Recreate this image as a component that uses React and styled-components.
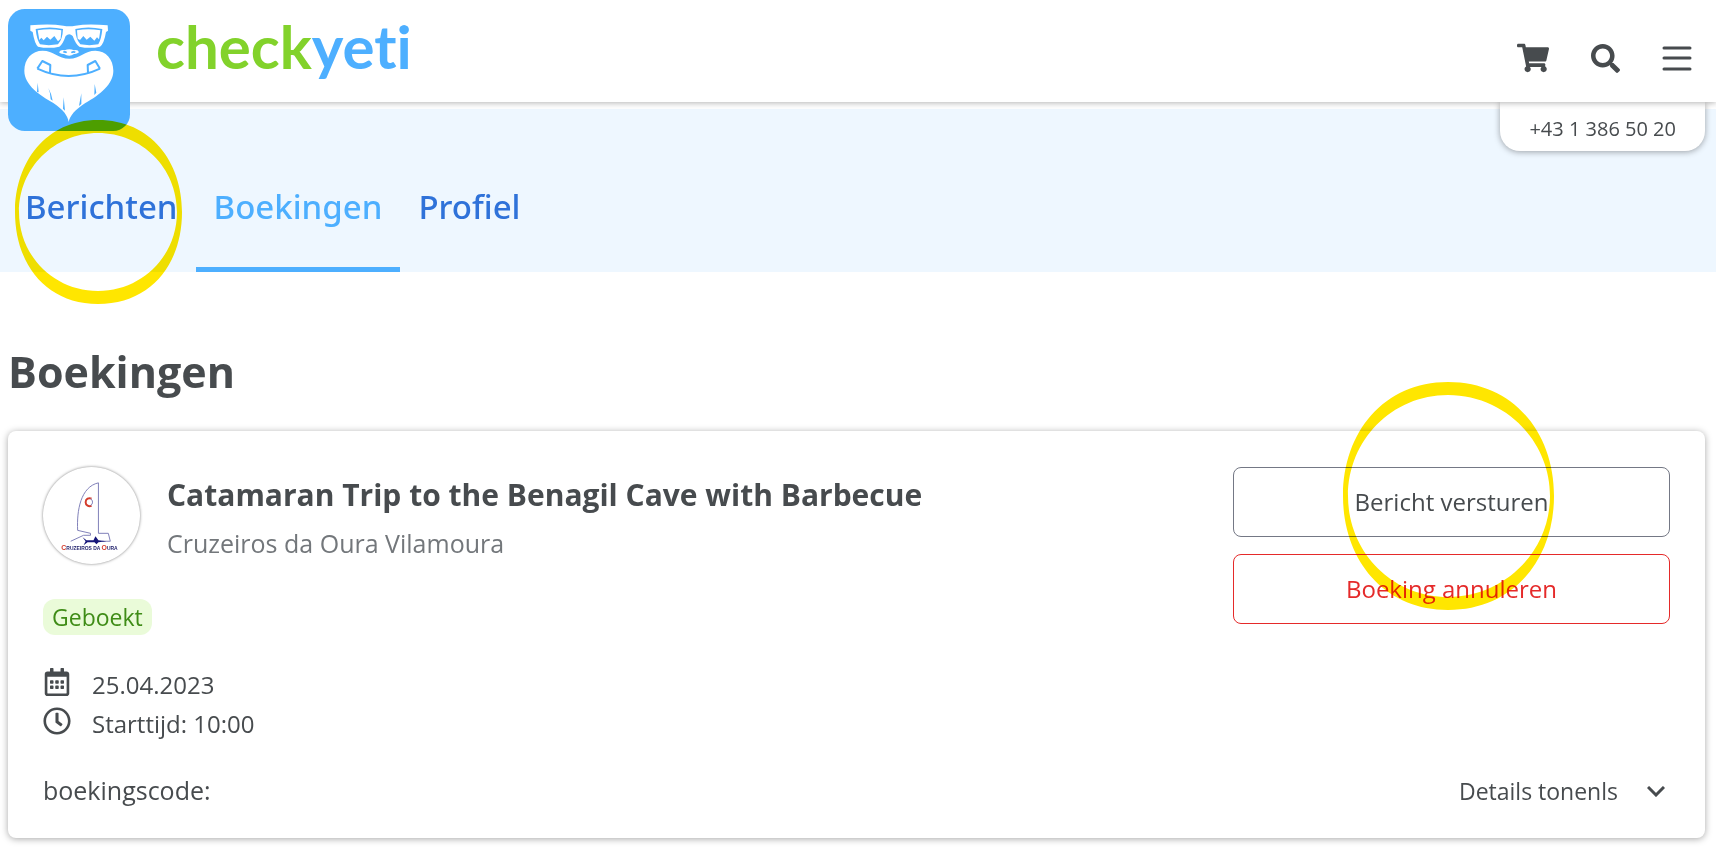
import styled, { createGlobalStyle } from "styled-components";
import { FaShoppingCart, FaSearch, FaRegCalendarAlt, FaRegClock } from "react-icons/fa";

const GlobalStyle = createGlobalStyle`
	* {
		box-sizing: border-box;
	}
	body {
		margin: 0;
		background: #fff;
		color: #474b4e;
		font-family: "Segoe UI", "Open Sans", "Noto Sans", sans-serif;
		font-size: 24px;
		line-height: 36px;
	}
	button {
		font: inherit;
		color: inherit;
		background: none;
		border: 0;
		padding: 0;
		cursor: pointer;
	}
	h1, h2, p, ul {
		margin: 0;
		padding: 0;
	}
	svg {
		display: block;
	}
`

const Page = styled.div`
	position: relative;
`

const Header = styled.header`
	position: relative;
	z-index: 2;
	display: flex;
	justify-content: space-between;
	height: 102px;
	padding: 0 24px 0 8px;
	background: #fff;
	box-shadow: 0 1px 6px rgba(0, 0, 0, 0.3);
`

const HomeLink = styled.a`
	display: flex;
	gap: 26px;
	height: 130px;
	padding-top: 9px;
	text-decoration: none;
`

const Wordmark = styled.span`
	font-family: Lato, sans-serif;
	font-size: 60px;
	font-weight: 700;
	font-variant-ligatures: none;
	line-height: 74px;
	color: ${({ $blue }) => ($blue ? "#4dafff" : "#82d22b")};
`

const Tools = styled.div`
	display: flex;
	align-items: center;
	gap: 42px;
	padding-top: 14px;
`

const Phone = styled.a`
	position: absolute;
	z-index: 1;
	top: 102px;
	right: 11px;
	padding: 9px 29px 4px;
	border-radius: 0 0 20px 20px;
	background: #fff;
	box-shadow: 0 1px 6px rgba(0, 0, 0, 0.35);
	font-size: 20px;
	color: inherit;
	text-decoration: none;
`

const Tabs = styled.nav`
	display: flex;
	height: 163px;
	margin-top: 7px;
	padding-left: 7px;
	background: #eef7ff;
`

const Tab = styled.a`
	padding: 80px 18px 0;
	border-bottom: 5px solid ${({ $active }) => ($active ? "#4dafff" : "transparent")};
	font-family: "Noto Sans", sans-serif;
	font-size: 33px;
	font-weight: 500;
	color: ${({ $active }) => ($active ? "#4dafff" : "#2f72d9")};
	text-decoration: none;
`

const Main = styled.main`
	padding: 68px 11px 14px 8px;
`

const PageTitle = styled.h1`
	font-size: 43px;
	line-height: 64px;
	font-weight: 700;
`

const Card = styled.article`
	margin-top: 27px;
	padding: 36px 35px 30px;
	border-radius: 8px;
	box-shadow: 0 1px 7px rgba(0, 0, 0, 0.35);
`

const CardTop = styled.div`
	display: flex;
	justify-content: space-between;
`

const Trip = styled.div`
	display: flex;
	gap: 27px;
	height: 98px;
`

const Avatar = styled.div`
	width: 97px;
	height: 97px;
	border-radius: 50%;
	overflow: hidden;
	box-shadow: 0 0 3px rgba(0, 0, 0, 0.5);
`

const TripTitle = styled.h2`
	padding-top: 6px;
	font-size: 30px;
	line-height: 44px;
	font-weight: 700;
`

const Provider = styled.p`
	padding-top: 8px;
	font-size: 25px;
	color: #73777b;
`

const Status = styled.span`
	display: inline-block;
	margin-top: 34px;
	padding: 0 9px;
	border-radius: 12px;
	background: #eafbd9;
	font-size: 23px;
	color: #3f8c17;
`

const Facts = styled.ul`
	margin-top: 29px;
	list-style: none;
`

const Fact = styled.li`
	display: flex;
	height: 39px;
	gap: 21px;
	line-height: 42px;
	svg {
		width: 28px;
		height: 28px;
		margin-top: 4px;
	}
`

const Actions = styled.div`
	display: flex;
	flex-direction: column;
	gap: 17px;
	width: 437px;
`

const ActionButton = styled.button`
	height: 70px;
	border: 1px solid ${({ $danger }) => ($danger ? "#e52a2a" : "#747885")};
	border-radius: 8px;
	color: ${({ $danger }) => ($danger ? "#e52a2a" : "inherit")};
`

const CardBottom = styled.div`
	display: flex;
	justify-content: space-between;
	margin-top: 30px;
`

const BookingCode = styled.span`
	font-size: 25px;
`

const DetailsButton = styled.button`
	display: flex;
	align-items: center;
	gap: 29px;
	margin-right: 5px;
	padding-top: 2px;
	font-size: 23px;
	line-height: 34px;
`

const Marker = styled.svg`
	position: absolute;
	z-index: 3;
	mix-blend-mode: multiply;
	pointer-events: none;
	fill: #ffe600;
`

const TabMarker = styled(Marker)`
	top: 120px;
	left: 15px;
	width: 167px;
	height: 184px;
`

const ButtonMarker = styled(Marker)`
	top: 382px;
	right: 162px;
	width: 211px;
	height: 228px;
`

const YetiLogo = () => (
	<svg width="122" height="122" viewBox="24 27 366 366" aria-hidden="true">
		<rect x="24" y="27" width="366" height="366" rx="50" fill="#4dafff" />
		<path d="M206 366C203 346 190 330 160 309C120 286 73 255 73 212C73 176 96 152 128 152C160 152 175 176 208 176C240 176 254 152 286 152C318 152 340 178 340 212C340 252 300 284 256 309C225 330 210 346 206 366Z" fill="#fff" />
		<path d="M177 157Q182 148 194 151Q208 145 222 151Q234 148 237 157Q230 163 222 162Q208 172 192 162Q182 163 177 157Z" fill="#fff" />
		<path d="M190 157Q195 154 200 158M214 158Q220 154 226 157" stroke="#4dafff" strokeWidth="5" fill="none" />
		<path d="M112 206Q206 250 300 206M112 206L127 183L151 195L150 219M300 206L286 183L263 195L264 219" fill="none" stroke="#4dafff" strokeWidth="6" strokeLinejoin="round" />
		<path d="M113 248L111 276L116 277ZM145 264Q156 284 158 302L152 298Q152 280 145 264ZM191 292L189 326L195 332ZM244 280L244 312L237 318ZM284 252L289 278L283 285Z" fill="#4dafff" />
		<path d="M91 76Q150 70 190 77Q208 80 226 77Q264 70 323 76L324 92L318 96Q312 132 300 140Q270 147 238 140Q228 134 218 108Q208 98 197 108Q188 134 178 140Q146 147 114 140Q104 132 98 96L91 92Z" fill="#fff" />
		<path d="M107 87Q150 78 189 87Q188 118 174 133Q146 138 120 133Q110 118 107 87ZM307 87Q264 78 226 87Q227 118 241 133Q268 138 295 133Q304 118 307 87Z" fill="#4dafff" />
		<path d="M113 91Q150 84 184 91L182 116L174 124L163 108L151 119L141 110L131 121L124 113L118 120ZM301 91Q264 84 231 91L233 116L240 120L250 108L260 119L271 110L283 122L291 112L297 118Z" fill="#fff" />
	</svg>
)

const SailLogo = () => (
	<svg width="97" height="97" viewBox="0 0 98 98">
		<path d="M56 16V67H66L68 75H60M28 75L41 69H48V67L35 64C34 44 38 20 56 16" fill="none" stroke="#8080b8" />
		<path d="M49 32A4 4 0 1 0 49 39" fill="none" stroke="#d43c2c" strokeWidth="2" />
		<path d="M48 32A4 4 0 0 1 48 39" fill="none" stroke="#8080b8" />
		<path d="M40 71L44 74H51L53 70L56 74L64 75L56 76L54 78L52 76H45L41 79L43 75Z" fill="#16167a" />
		<text x="47" y="84" textAnchor="middle" fontFamily="Liberation Sans, sans-serif" fontSize="5" fontWeight="700" fill="#24246e">
			<tspan fill="#d43c2c" fontSize="7">C</tspan>RUZEIROS DA <tspan fill="#d43c2c" fontSize="7">O</tspan>URA
		</text>
	</svg>
)

const MenuIcon = () => (
	<svg width="30" height="26" viewBox="0 0 30 26" stroke="currentColor" strokeWidth="3" strokeLinecap="round">
		<path d="M2 3H28M2 13H28M2 24H28" />
	</svg>
)

const App = () => {
	return (
		<Page>
			<GlobalStyle />
			<Header>
				<HomeLink href="#">
					<YetiLogo />
					<div>
						<Wordmark>check</Wordmark>
						<Wordmark $blue>yeti</Wordmark>
					</div>
				</HomeLink>
				<Tools>
					<button aria-label="Winkelwagen"><FaShoppingCart size={32} /></button>
					<button aria-label="Zoeken"><FaSearch size={29} /></button>
					<button aria-label="Menu"><MenuIcon /></button>
				</Tools>
			</Header>
			<Phone href="tel:+4313865020">+43 1 386 50 20</Phone>
			<Tabs>
				<Tab href="#berichten">Berichten</Tab>
				<Tab href="#boekingen" $active>Boekingen</Tab>
				<Tab href="#profiel">Profiel</Tab>
			</Tabs>
			<Main>
				<PageTitle>Boekingen</PageTitle>
				<Card>
					<CardTop>
						<div>
							<Trip>
								<Avatar><SailLogo /></Avatar>
								<div>
									<TripTitle>Catamaran Trip to the Benagil Cave with Barbecue</TripTitle>
									<Provider>Cruzeiros da Oura Vilamoura</Provider>
								</div>
							</Trip>
							<Status>Geboekt</Status>
							<Facts>
								<Fact><FaRegCalendarAlt />25.04.2023</Fact>
								<Fact><FaRegClock />Starttijd: 10:00</Fact>
							</Facts>
						</div>
						<Actions>
							<ActionButton>Bericht versturen</ActionButton>
							<ActionButton $danger>Boeking annuleren</ActionButton>
						</Actions>
					</CardTop>
					<CardBottom>
						<BookingCode>boekingscode:</BookingCode>
						<DetailsButton>
							Details tonenls
							<svg width="18" height="11" viewBox="0 0 18 11" fill="none" stroke="currentColor" strokeWidth="3">
								<path d="M1 1L9 9L17 1" />
							</svg>
						</DetailsButton>
					</CardBottom>
				</Card>
			</Main>
			<TabMarker viewBox="0 0 167 184" aria-hidden="true">
				<path fillRule="evenodd" d="M83 0C136 0 167 42 167 92C167 144 136 184 83 184C31 184 0 144 0 92C0 42 31 0 83 0ZM83 13C39 13 4 48 4 92C4 136 39 171 83 171C127 171 162 136 162 92C162 48 127 13 83 13Z" />
			</TabMarker>
			<ButtonMarker viewBox="0 0 211 228" aria-hidden="true">
				<path fillRule="evenodd" d="M105 0C170 0 211 50 211 114C211 178 170 228 105 228C41 228 0 178 0 114C0 50 41 0 105 0ZM105 13C49 13 5 58 5 114C5 170 49 215 105 215C161 215 207 170 207 114C207 58 161 13 105 13Z" />
			</ButtonMarker>
		</Page>
	)
}

export default App;
